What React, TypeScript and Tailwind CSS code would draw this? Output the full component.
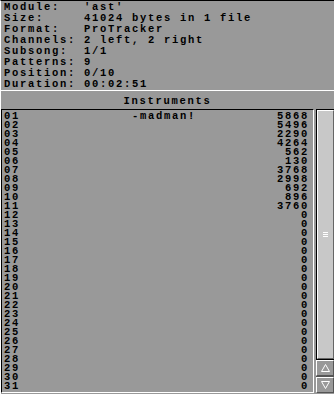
const INFO: [string, string][] = [
  ["Module:", "'ast'"],
  ["Size:", "41024 bytes in 1 file"],
  ["Format:", "ProTracker"],
  ["Channels:", "2 left, 2 right"],
  ["Subsong:", "1/1"],
  ["Patterns:", "9"],
  ["Position:", "0/10"],
  ["Duration:", "00:02:51"],
];

const SIZES = [5868, 5496, 2290, 4264, 562, 130, 3768, 2998, 692, 896, 3760];

const ROWS = Array.from({ length: 31 }, (_, i) => ({
  num: String(i + 1).padStart(2, "0"),
  name: i === 0 ? "-madman!" : "",
  size: SIZES[i] ?? 0,
}));

function ScrollButton({ up }: { up?: boolean }) {
  return (
    <div className="h-[16px] flex items-center justify-center border-t border-l border-white border-b border-r border-b-[#555] border-r-[#555] bg-[#999]">
      <svg width="9" height="8" viewBox="0 0 9 8" className="block">
        {up ? (
          <path d="M4.5 0.5 L8.5 7.5 L0.5 7.5 Z" fill="none" stroke="#fff" strokeWidth="1" />
        ) : (
          <path d="M0.5 0.5 L8.5 0.5 L4.5 7.5 Z" fill="none" stroke="#fff" strokeWidth="1" />
        )}
      </svg>
    </div>
  );
}

export default function App() {
  return (
    <div className="w-[334px] h-[394px] bg-[#999999] flex flex-col overflow-hidden font-['Liberation_Mono',monospace] font-bold text-[10.5px] tracking-[1.7px] text-black">
      <div className="border-t border-black border-l border-l-white pt-[1px] pl-[3px] leading-[11px] whitespace-pre">
        {INFO.map(([label, value]) => (
          <div key={label} className="flex">
            <span className="w-[80px]">{label}</span>
            <span>{value}</span>
          </div>
        ))}
      </div>

      <div className="flex-1 flex flex-col border-t border-white border-l border-l-white min-h-0">
        <div className="h-[18px] pt-[5px] leading-[11px] text-center">Instruments</div>
        <div className="flex-1 flex pb-[1px] min-h-0">
          <div className="w-[313px] border-t border-l border-black border-b border-r border-b-white border-r-white pt-[2px] pl-[2px] pr-[4px] leading-[9px] overflow-hidden">
            {ROWS.map((r) => (
              <div key={r.num} className="flex h-[9px]">
                <span className="w-[128px]">{r.num}</span>
                <span className="flex-1">{r.name}</span>
                <span className="text-right">{r.size}</span>
              </div>
            ))}
          </div>
          <div className="ml-[2px] w-[18px] flex flex-col">
            <div className="flex-1 border-t border-l border-black flex">
              <div className="flex-1 border-t border-l border-white border-b border-r border-b-[#666] border-r-[#666] bg-[#c8c8c8] flex items-center justify-center">
                <div className="flex flex-col gap-[1px]">
                  <div className="w-[5px] h-[1px] bg-white" />
                  <div className="w-[5px] h-[1px] bg-white" />
                  <div className="w-[5px] h-[1px] bg-white" />
                </div>
              </div>
            </div>
            <div className="border-t border-black">
              <ScrollButton up />
            </div>
            <div className="border-t border-[#555]">
              <ScrollButton />
            </div>
          </div>
        </div>
      </div>
    </div>
  );
}
